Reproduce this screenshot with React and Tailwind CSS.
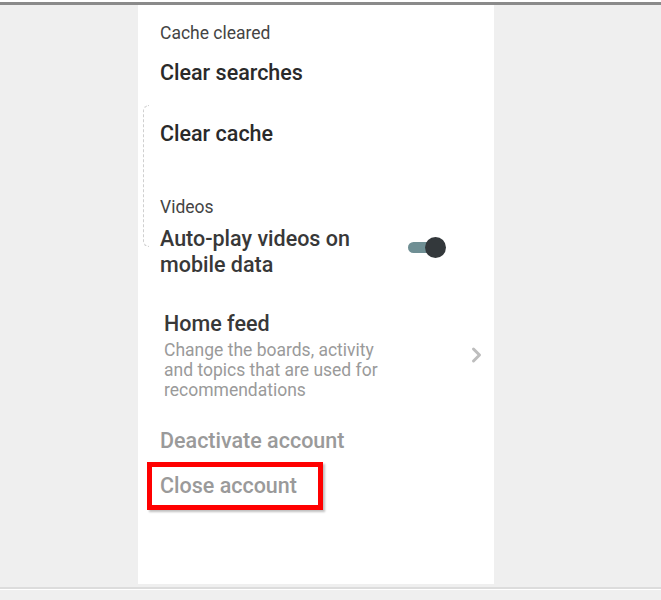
export default function App() {
  return (
    <div
      className="relative h-[600px] w-[661px] overflow-hidden bg-[#efefef]"
      style={{ fontFamily: "Roboto, 'Noto Sans', sans-serif" }}
    >
      <div className="h-[2px] bg-white" />
      <div className="h-[3px] bg-[#8a8a8a]" />

      <div className="relative ml-[138px] h-[579px] w-[356px] bg-white pl-[22px]">
        {/* faint bracket on the left edge */}
        <div className="absolute left-[5px] top-[100px] h-[142px] w-[6px] rounded-l-[6px] border-y border-l border-r-0 border-dashed border-[#cfcfcf]" />

        <p className="pt-[16px] text-[17.5px] leading-[24px] text-[#444]">Cache cleared</p>
        <p className="mt-[14px] text-[21.5px] font-medium leading-[28px] text-[#2a2a2a]">Clear searches</p>
        <p className="mt-[33px] text-[21.5px] font-medium leading-[28px] text-[#2a2a2a]">Clear cache</p>

        <p className="mt-[47px] text-[17.5px] leading-[24px] text-[#444]">Videos</p>
        <div className="mt-[7px] flex items-center">
          <p className="w-[230px] text-[21.5px] font-medium leading-[26px] text-[#383838]">
            Auto-play videos on mobile data
          </p>
          <div className="relative mb-[10px] ml-[18px] h-[21px] w-[38px]">
            <div className="absolute left-0 top-[5px] h-[11px] w-[30px] rounded-full bg-[#6f8f94]" />
            <div className="absolute right-0 top-0 h-[21px] w-[21px] rounded-full bg-[#33383b]" />
          </div>
        </div>

        <div className="mt-[32px] flex items-center pl-[4px]">
          <div className="w-[284px]">
            <p className="text-[21.5px] font-medium leading-[28px] text-[#383838]">Home feed</p>
            <p className="mt-[2px] w-[218px] text-[17.5px] leading-[20px] text-[#9a9a9a]">
              Change the boards, activity and topics that are used for recommendations
            </p>
          </div>
          <svg
            className="ml-[22px]"
            width="13"
            height="18"
            viewBox="0 0 13 18"
            fill="none"
            stroke="#bdbdbd"
            strokeWidth="3"
            strokeLinecap="round"
            strokeLinejoin="round"
          >
            <path d="M3.5 3l6 6-6 6" />
          </svg>
        </div>

        <p className="mt-[27px] text-[21.5px] font-medium leading-[28px] text-[#9a9a9a]">Deactivate account</p>
        <div className="-ml-[13px] mt-[7px] w-[176px] border-[5px] border-[#ff0000] pl-[8px] shadow-[2px_2px_2px_rgba(0,0,0,0.25)]">
          <p className="text-[21.5px] font-medium leading-[38px] text-[#9a9a9a]">Close account</p>
        </div>
      </div>

      <div className="mt-[3px] h-[2px] bg-[#dcdcdc]" />
      <div className="h-[1px] bg-white" />
    </div>
  );
}
